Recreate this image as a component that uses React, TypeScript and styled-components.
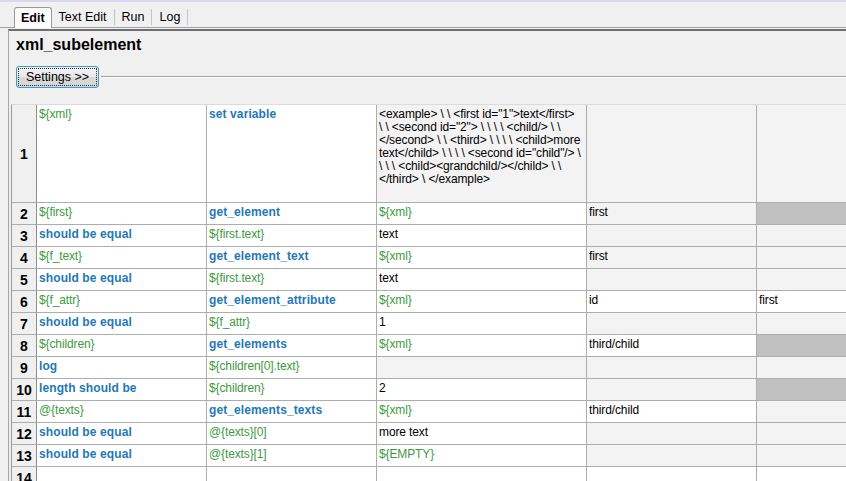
import React from "react";
import styled, { createGlobalStyle, css } from "styled-components";

const GlobalStyle = createGlobalStyle`
  html, body { margin: 0; padding: 0; background: #f0f0f0; overflow: hidden; }
  body { font-family: "Liberation Sans", Arial, sans-serif; font-size: 12px; color: #000; }
`;

const Page = styled.div`
  width: 846px;
  height: 481px;
  overflow: hidden;
  background: #f0f0f0;
`;

const TopStrip = styled.div`
  height: 2px;
  background: #dad6ef;
`;

const TabBar = styled.div`
  display: flex;
  align-items: flex-end;
  height: 25px;
  padding-left: 14px;
  border-bottom: 1px solid #a0a0a0;
`;

const Tab = styled.div<{ $active?: boolean }>`
  display: flex;
  align-items: center;
  font-size: 12.5px;
  box-sizing: border-box;
  ${(p) =>
    p.$active
      ? css`
          height: 21px;
          margin-bottom: -1px;
          padding: 0 6px;
          background: #fcfcfc;
          border: 1px solid #9a9a9a;
          border-bottom: none;
          border-radius: 3px 3px 0 0;
          font-weight: bold;
          position: relative;
        `
      : css`
          height: 16px;
          margin-bottom: 2px;
          padding: 0 7px 0 7px;
          border-right: 1px solid #c4c4c4;
        `}
`;

const Panel = styled.div`
  margin-top: 1px;
  margin-left: 8px;
  border-top: 2px solid #6f6f6f;
  border-left: 1px solid #a7a7a7;
  height: 460px;
`;

const Title = styled.div`
  padding: 4px 0 0 7px;
  height: 20px;
  line-height: 20px;
  font-size: 16px;
  font-weight: bold;
`;

const SettingsRow = styled.div`
  display: flex;
  align-items: center;
  margin-top: 11px;
  padding-left: 7px;
`;

const SettingsButton = styled.button`
  width: 83px;
  height: 22px;
  box-sizing: border-box;
  border: 1px solid #3c9ad8;
  border-radius: 3px;
  background: linear-gradient(#f4f4f4, #e8e8e8 50%, #d9d9d9 51%, #d4d4d4);
  font-family: "Liberation Sans", Arial, sans-serif;
  font-size: 12.5px;
  color: #000;
  padding: 0;
  outline: 1px dotted #333;
  outline-offset: -3px;
`;

const Divider = styled.div`
  flex: 1;
  margin-left: 2px;
  border-top: 1px solid #a0a0a0;
  border-bottom: 1px solid #ffffff;
`;

const Grid = styled.div`
  margin-top: 16px;
  margin-left: 2px;
  border-left: 1px solid #9a9a9a;
  border-top: 1px solid #dcdcdc;
`;

const Row = styled.div<{ $h: number }>`
  display: grid;
  grid-template-columns: 25px 170px 170px 210px 170px 100px;
  height: ${(p) => p.$h}px;
`;

const RowNum = styled.div`
  display: flex;
  align-items: center;
  justify-content: center;
  background: #f0f0f0;
  font-weight: bold;
  font-size: 14px;
  border-right: 1px solid #8e8e8e;
  border-bottom: 1px solid #adadad;
  box-sizing: border-box;
`;

type Kind = "kw" | "var" | "text";
type Bg = "w" | "g" | "d";

const bgColor: Record<Bg, string> = { w: "#ffffff", g: "#f3f3f3", d: "#c0c0c0" };
const fgColor: Record<Kind, string> = { kw: "#1f78b8", var: "#3e9a3e", text: "#000000" };

const Cell = styled.div<{ $bg: Bg; $kind: Kind }>`
  box-sizing: border-box;
  padding: 3px 2px 0 2px;
  line-height: 13px;
  font-size: 12px;
  white-space: nowrap;
  overflow: hidden;
  border-right: 1px solid #adadad;
  border-bottom: 1px solid #adadad;
  background: ${(p) => bgColor[p.$bg]};
  color: ${(p) => fgColor[p.$kind]};
  font-weight: ${(p) => (p.$kind === "kw" ? "bold" : "normal")};
  letter-spacing: ${(p) => (p.$kind === "kw" ? "0.1px" : "-0.12px")};
`;

type CellData = { t?: string | string[]; k?: Kind; b?: Bg };

const xmlLines = [
  '<example> \\ \\ <first id="1">text</first>',
  '\\ \\ <second id="2"> \\ \\ \\ \\ <child/> \\ \\',
  "</second> \\ \\ <third> \\ \\ \\ \\ <child>more",
  'text</child> \\ \\ \\ \\ <second id="child"/> \\',
  "\\ \\ \\ <child><grandchild/></child> \\ \\",
  "</third> \\ </example>",
];

const V = (t: string, b: Bg = "w"): CellData => ({ t, k: "var", b });
const K = (t: string, b: Bg = "w"): CellData => ({ t, k: "kw", b });
const T = (t: string | string[], b: Bg = "w"): CellData => ({ t, k: "text", b });
const E = (b: Bg): CellData => ({ b });

const rows: { h: number; cells: CellData[] }[] = [
  { h: 98, cells: [V("${xml}"), K("set variable"), T(xmlLines, "g"), E("g"), E("g")] },
  { h: 22, cells: [V("${first}"), K("get_element"), V("${xml}"), T("first", "g"), E("d")] },
  { h: 22, cells: [K("should be equal"), V("${first.text}"), T("text"), E("g"), E("g")] },
  { h: 22, cells: [V("${f_text}"), K("get_element_text"), V("${xml}"), T("first", "g"), E("g")] },
  { h: 22, cells: [K("should be equal"), V("${first.text}"), T("text"), E("g"), E("g")] },
  { h: 22, cells: [V("${f_attr}"), K("get_element_attribute"), V("${xml}"), T("id"), T("first")] },
  { h: 22, cells: [K("should be equal"), V("${f_attr}"), T("1"), E("g"), E("g")] },
  { h: 22, cells: [V("${children}"), K("get_elements"), V("${xml}"), T("third/child"), E("d")] },
  { h: 22, cells: [K("log"), V("${children[0].text}"), E("g"), E("g"), E("g")] },
  { h: 22, cells: [K("length should be"), V("${children}"), T("2"), E("g"), E("d")] },
  { h: 22, cells: [V("@{texts}"), K("get_elements_texts"), V("${xml}"), T("third/child"), E("g")] },
  { h: 22, cells: [K("should be equal"), V("@{texts}[0]"), T("more text"), E("g"), E("g")] },
  { h: 22, cells: [K("should be equal"), V("@{texts}[1]"), V("${EMPTY}"), E("g"), E("g")] },
  { h: 22, cells: [E("w"), E("w"), E("w"), E("w"), E("w")] },
];

export default function App() {
  return (
    <Page>
      <GlobalStyle />
      <TopStrip />
      <TabBar>
        <Tab $active>Edit</Tab>
        <Tab>Text Edit</Tab>
        <Tab>Run</Tab>
        <Tab>Log</Tab>
      </TabBar>
      <Panel>
        <Title>xml_subelement</Title>
        <SettingsRow>
          <SettingsButton>Settings &gt;&gt;</SettingsButton>
          <Divider />
        </SettingsRow>
        <Grid>
          {rows.map((r, i) => (
            <Row key={i} $h={r.h}>
              <RowNum>{i + 1}</RowNum>
              {r.cells.map((c, j) => (
                <Cell key={j} $bg={c.b ?? "w"} $kind={c.k ?? "text"}>
                  {Array.isArray(c.t)
                    ? c.t.map((line, n) => <div key={n}>{line}</div>)
                    : c.t}
                </Cell>
              ))}
            </Row>
          ))}
        </Grid>
      </Panel>
    </Page>
  );
}
